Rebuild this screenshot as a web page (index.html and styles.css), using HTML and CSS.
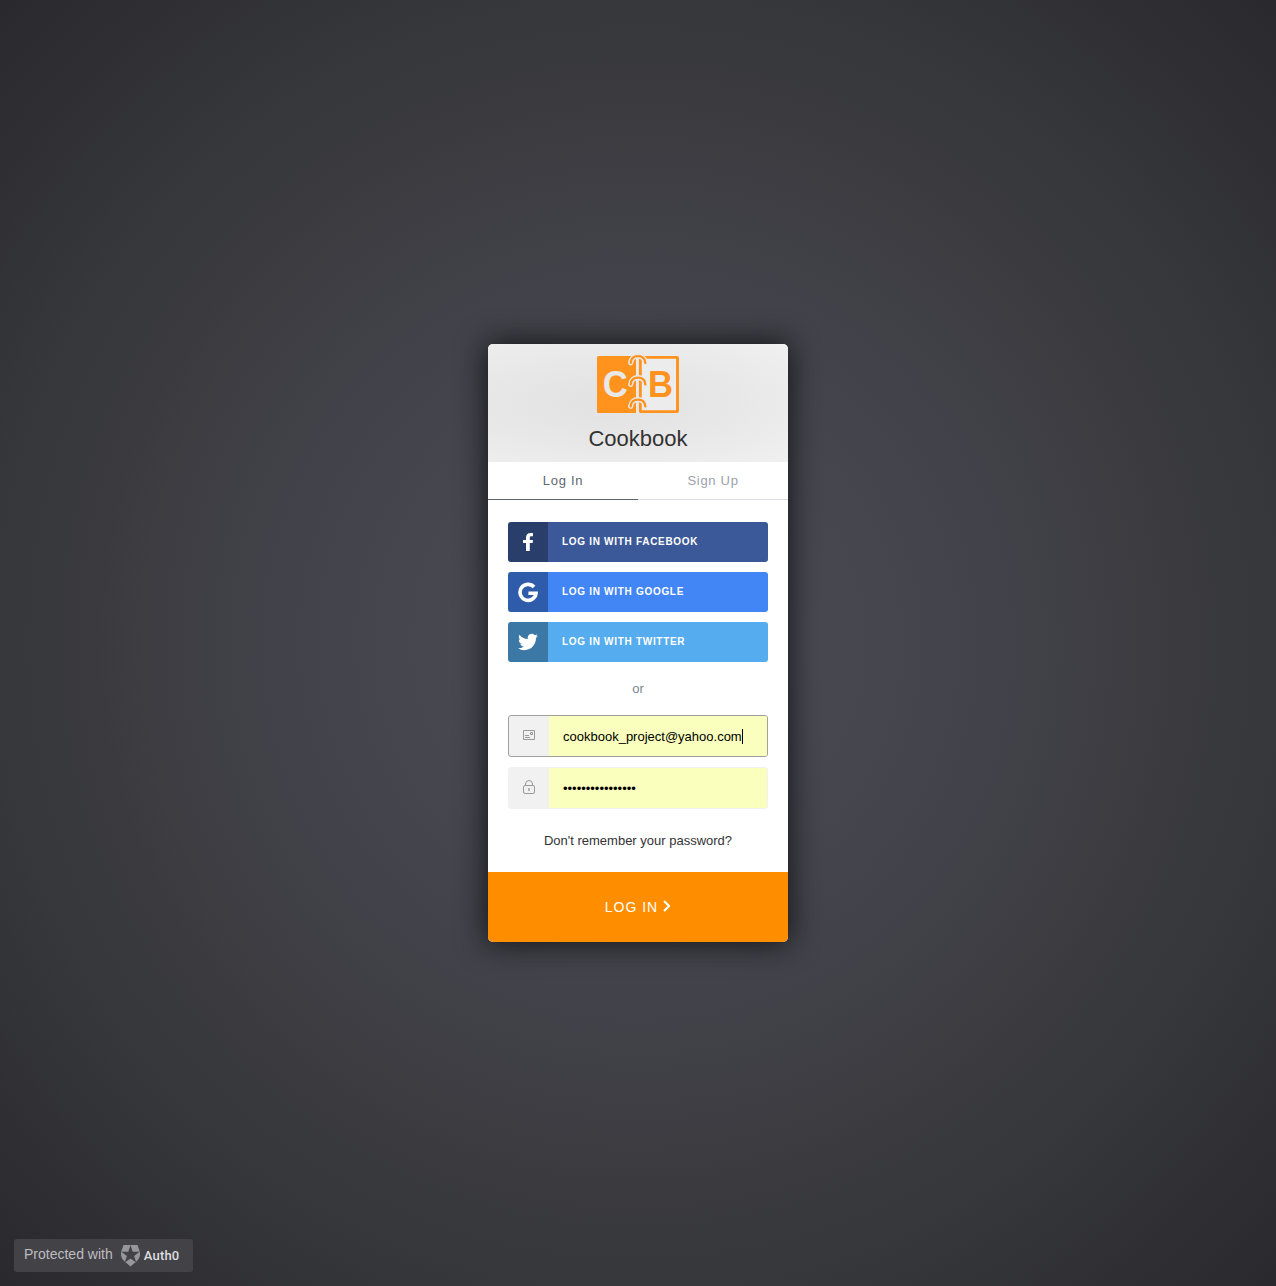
FILE: index.html
```html
<!DOCTYPE html>
<html lang="en">
<head>
<meta charset="utf-8">
<title>Cookbook</title>
<link rel="stylesheet" href="styles.css">
</head>
<body>
<main class="card">
  <header class="header">
    <svg class="logo" width="82" height="59" viewBox="9 6 82 59" role="img" aria-label="Cookbook">
      <path fill="#ff931e" d="M10.500 8H48v57H10.500q-1.500 0-1.500-1.500v-54Q9 8 10.500 8z"/>
      <rect x="52.300" y="9.400" width="37.200" height="54.200" rx=".5" fill="#ececec" stroke="#ff931e" stroke-width="2.900"/>
      <path d="M49.300 7v58" stroke="#e8e8e8" stroke-width="2.600"/>
      <text class="letter letter-c" x="14.700" y="49.200" textLength="25" lengthAdjust="spacingAndGlyphs">C</text>
      <text class="letter letter-b" x="60" y="49.200" textLength="25" lengthAdjust="spacingAndGlyphs">B</text>
      <g fill="none" stroke-linecap="round">
        <g stroke="#e8e8e8" stroke-width="5.200"><path d="M42.700 14.800C43 10.500 46 8.200 50 8.200s7 2.300 7.300 6.600"/><path d="M42.700 36.300C43 32 46 29.700 50 29.700s7 2.300 7.300 6.600"/><path d="M42.700 58.300C43 54 46 51.700 50 51.700s7 2.300 7.300 6.600"/></g>
        <g stroke="#ff931e" stroke-width="2.300"><path d="M42.700 14.800C43 10.500 46 8.200 50 8.200s7 2.300 7.300 6.600"/><path d="M42.700 36.300C43 32 46 29.700 50 29.700s7 2.300 7.300 6.600"/><path d="M42.700 58.300C43 54 46 51.700 50 51.700s7 2.300 7.300 6.600"/></g>
      </g>
    </svg>
    <h1 class="title">Cookbook</h1>
  </header>
  <nav class="tabs"><a class="tab tab-active">Log In</a><a class="tab">Sign Up</a></nav>
  <section class="content">
    <div class="social-list">
      <button class="social facebook"><span class="social-icon"><svg width="20" height="20" viewBox="0 0 20 20"><path fill="#fff" d="M8 19v-8H5V8h3V5.800C8 2.700 9.700 1 12.400 1H15v3.300h-1.700c-1.200 0-1.500.6-1.500 1.500V8H15l-.4 3h-2.800v8z"/></svg></span><span class="social-text">Log in with Facebook</span></button>
      <button class="social google"><span class="social-icon"><svg width="22" height="22" viewBox="0 0 22 22"><path fill="none" stroke="#fff" stroke-width="3.600" d="M17 6A8 8 0 1 0 19 12.200H11.400"/></svg></span><span class="social-text">Log in with Google</span></button>
      <button class="social twitter"><span class="social-icon"><svg width="20" height="20" viewBox="0 0 24 24"><path fill="#fff" d="M23.950 4.570a10 10 0 0 1-2.820.77 4.960 4.960 0 0 0 2.160-2.720c-.95.550-2 .95-3.130 1.180a4.920 4.920 0 0 0-8.380 4.480C7.690 8.100 4.070 6.130 1.640 3.160a4.820 4.820 0 0 0-.67 2.480c0 1.710.87 3.210 2.190 4.100a4.900 4.900 0 0 1-2.230-.62v.06a4.920 4.920 0 0 0 3.950 4.830 5 5 0 0 1-2.210.08 4.940 4.940 0 0 0 4.600 3.420A9.870 9.870 0 0 1 0 19.540a13.990 13.990 0 0 0 7.560 2.210c9.050 0 13.990-7.500 13.990-13.980 0-.21 0-.42-.02-.63a9.940 9.940 0 0 0 2.420-2.570z"/></svg></span><span class="social-text">Log in with Twitter</span></button>
    </div>
    <p class="separator">or</p>
    <div class="fields">
      <div class="field field-focused"><span class="field-icon"><svg width="12" height="10" viewBox="0 0 12 10" fill="none" stroke="#999"><path d="M.5.500h11v9H.500zM2 5.500h4M2 7.500h5M7.500 2.500h2v2h-2z"/></svg></span><span class="field-value">cookbook_project@yahoo.com<i class="caret"></i></span></div>
      <div class="field"><span class="field-icon"><svg width="12" height="14" viewBox="0 0 12 14" fill="none" stroke="#999"><rect x=".5" y="5.500" width="11" height="8" rx="1.500"/><path d="M2.500 5.500V4a3.500 3.500 0 0 1 7 0v1.500"/><path stroke-width="1.400" d="M6 8v3"/></svg></span><span class="field-value">••••••••••••••••</span></div>
    </div>
    <a class="forgot">Don't remember your password?</a>
  </section>
  <button class="submit"><span>LOG IN</span><svg class="chevron" width="8" height="12" viewBox="0 0 8 12"><path d="M1 1l5 5-5 5" fill="none" stroke="#fff" stroke-width="2.200"/></svg></button>
</main>
<a class="badge"><span class="badge-label">Protected with</span><svg width="19" height="22" viewBox="0 0 19 22"><path fill="#97979b" fill-rule="evenodd" d="M2.500 0h14l2.200 6.500c1 4-.2 7.300-3.400 9.900L9.500 21.500l-5.800-5.100C.5 13.800-.7 10.500.3 6.500zM9.500 0L7.300 6.700H.4L5.900 10.900 3.700 17.600 9.500 13.500l5.800 4.100-2.200-6.700 5.500-4.200h-6.900z"/></svg><span class="badge-name">Auth0</span></a>
</body>
</html>
```
FILE: styles.css
```css
* { box-sizing: border-box; }
body {
  margin: 0;
  height: 1286px;
  display: flex;
  align-items: center;
  justify-content: center;
  font-family: "Liberation Sans", Arial, sans-serif;
  font-size: 13px;
  background: radial-gradient(farthest-corner, #4e4e59 0%, #42424a 40%, #3b3b3f 60%, #36373a 72%, #2a292e 100%);
}
button { border: 0; padding: 0; font-family: inherit; }
.card {
  width: 300px;
  height: 598px;
  display: flex;
  flex-direction: column;
  border-radius: 5px;
  overflow: hidden;
  background: #fff;
  box-shadow: 0 0 30px 1px rgba(10, 10, 14, .88);
}
.header {
  height: 118px;
  flex: none;
  display: flex;
  flex-direction: column;
  align-items: center;
  padding-top: 10px;
  background: radial-gradient(ellipse at 40% 50%, #e2e2e2 0%, #e7e7e7 45%, #f0f0f0 100%);
}
.letter { font-weight: bold; font-size: 36px; }
.letter-c { fill: #e8e8e8; }
.letter-b { fill: #ff931e; }
.title { margin: 13px 0 0; font-size: 22px; line-height: 26px; font-weight: 400; color: #333; }
.tabs { display: flex; height: 38px; flex: none; }
.tab {
  flex: 1;
  text-align: center;
  line-height: 37px;
  letter-spacing: .7px;
  color: #9ba1ac;
  border-bottom: 1px solid #d9dce0;
}
.tab-active { color: #5c666f; border-color: #5c666f; }
.content { flex: 1; padding: 22px 20px 0; display: flex; flex-direction: column; }
.social-list, .fields { display: flex; flex-direction: column; gap: 10px; }
.social { height: 40px; display: flex; align-items: center; border-radius: 3px; overflow: hidden; color: #fff; }
.social-icon { width: 40px; height: 40px; display: flex; align-items: center; justify-content: center; background: rgba(0, 0, 0, .3); }
.social-text { padding: 0 0 1px 14px; font-size: 10px; font-weight: 700; letter-spacing: .7px; text-transform: uppercase; }
.facebook { background: #3b5998; }
.google { background: #4285f4; }
.twitter { background: #55acee; }
.separator { margin: 19px 0 18px; text-align: center; line-height: 16px; color: #7d858e; }
.field { height: 42px; display: flex; border: 1px solid #f1f1f1; border-radius: 3px; overflow: hidden; background: #f1f1f1; }
.field-focused { border-color: #a0a0a0; }
.field-icon { width: 40px; display: flex; align-items: center; justify-content: center; padding-bottom: 2px; }
.field-value { flex: 1; display: flex; align-items: center; padding-left: 14px; background: #faffbd; color: #000; }
.caret { width: 1px; height: 15px; background: #000; }
.forgot { margin-top: 24px; line-height: 16px; text-align: center; color: #333; }
.submit {
  height: 70px;
  flex: none;
  display: flex;
  align-items: center;
  justify-content: center;
  gap: 5px;
  background: #ff8d00;
  color: #fff;
  font-size: 14px;
  letter-spacing: 1px;
}
.chevron { margin-bottom: 2px; }
.badge {
  position: fixed;
  left: 14px;
  bottom: 14px;
  width: 179px;
  height: 33px;
  display: flex;
  align-items: center;
  padding-left: 10px;
  border-radius: 3px;
  background: #434247;
  color: #bdbdc0;
}
.badge-label { font-size: 14px; padding-bottom: 3px; margin-right: 8px; }
.badge-name { margin-left: 4px; font: 500 13px Roboto, sans-serif; letter-spacing: .2px; color: #dedee0; }
```
